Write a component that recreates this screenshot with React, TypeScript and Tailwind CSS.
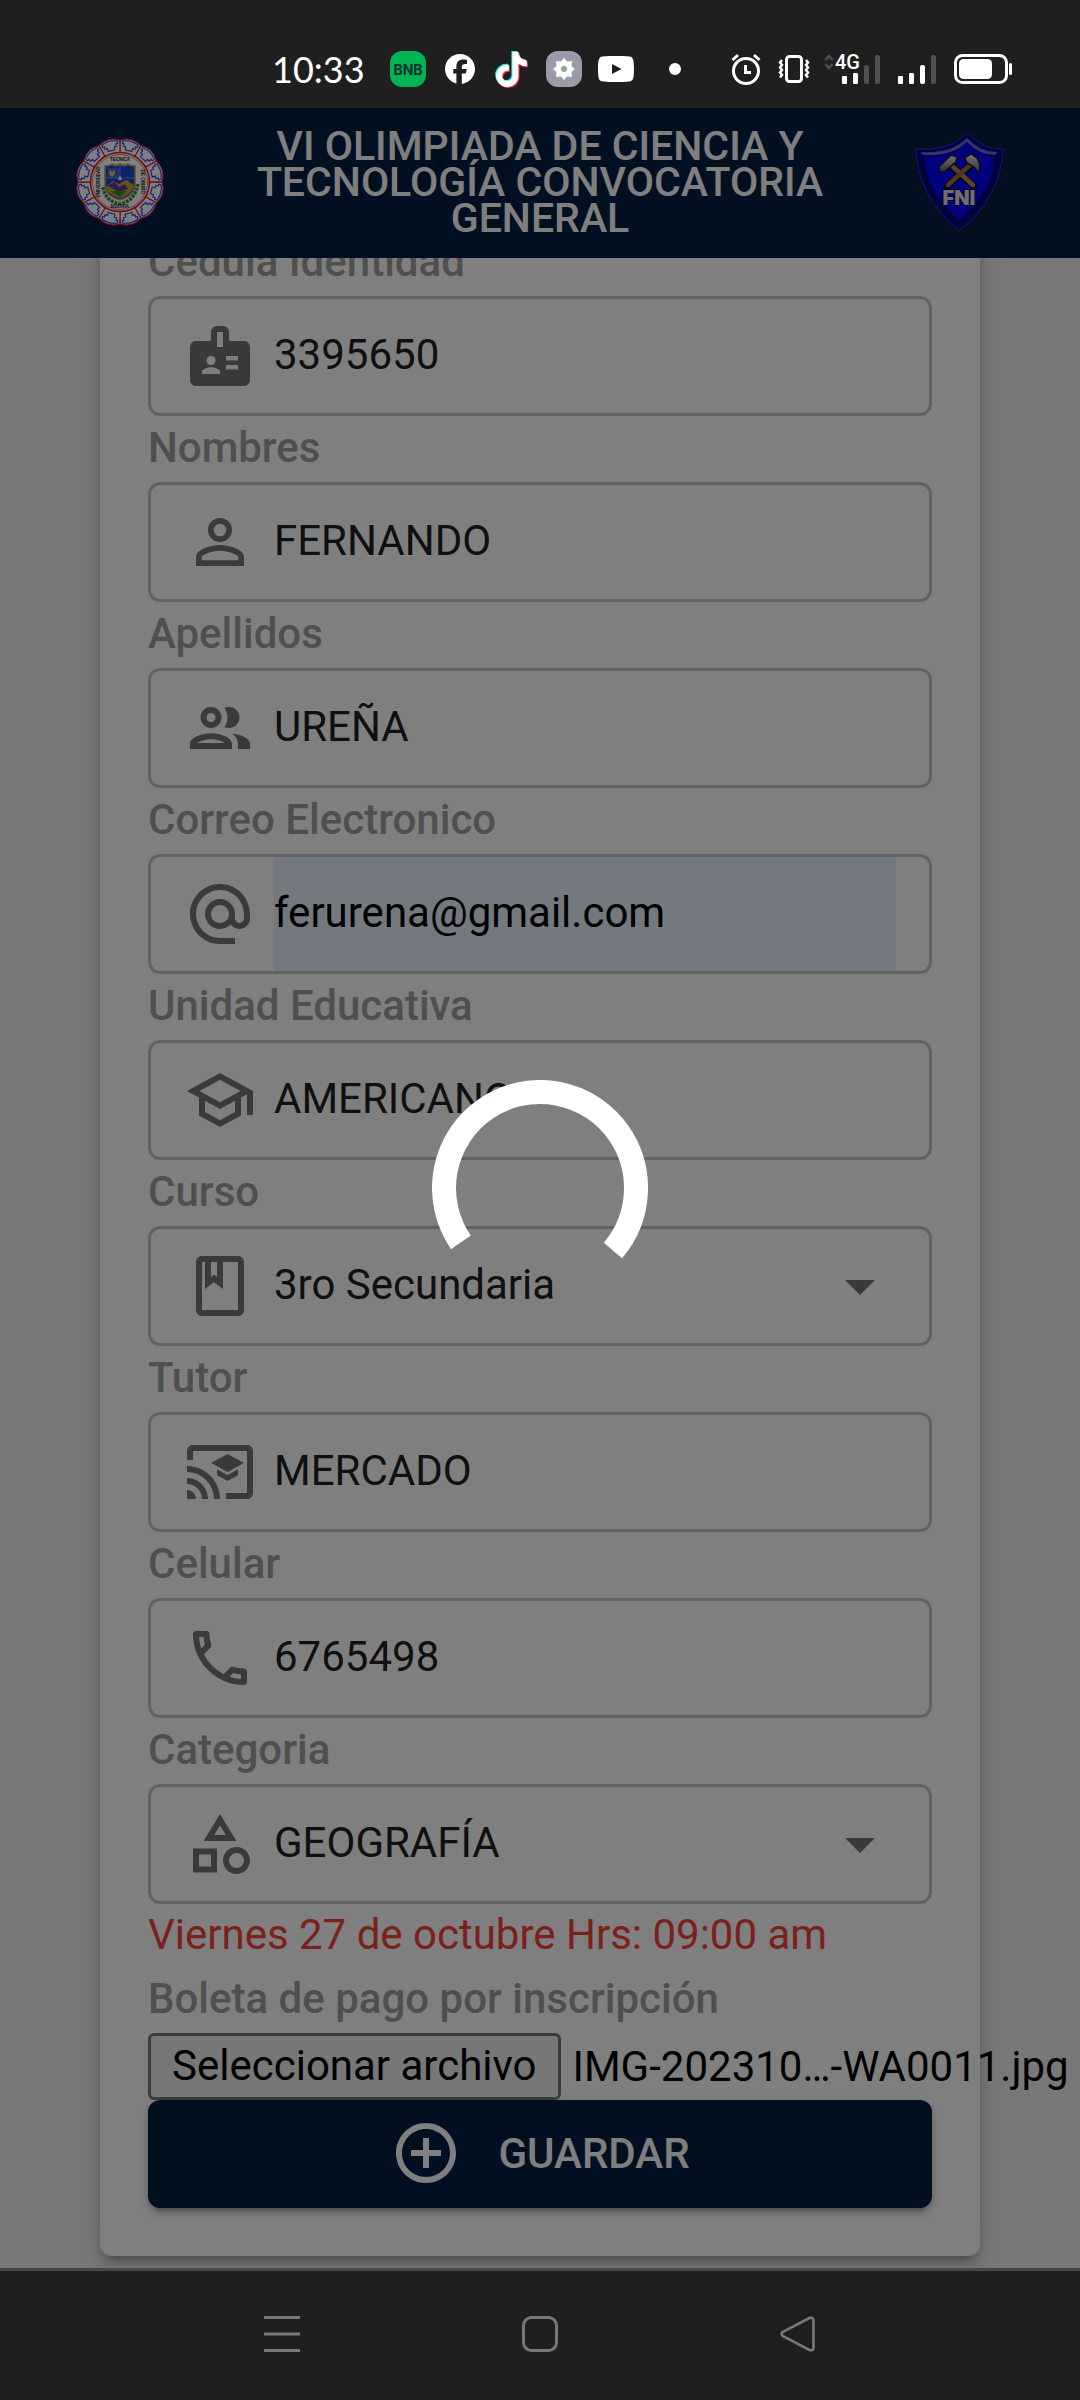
import React from "react";
import type { IconType } from "react-icons";
import {
  MdAddCircleOutline,
  MdAlternateEmail,
  MdArrowDropDown,
  MdBadge,
  MdOutlineCastForEducation,
  MdOutlineCategory,
  MdOutlineClass,
  MdOutlinePeople,
  MdOutlinePhone,
  MdOutlineSchool,
  MdPersonOutline,
} from "react-icons/md";
import { FaFacebook, FaTiktok } from "react-icons/fa6";

type FieldDef = {
  id: string;
  label: string;
  value: string;
  icon: IconType;
  type?: string;
  options?: string[];
  autofilled?: boolean;
};

const fields: FieldDef[] = [
  { id: "ci", label: "Cedula Identidad", value: "3395650", icon: MdBadge },
  { id: "nombres", label: "Nombres", value: "FERNANDO", icon: MdPersonOutline },
  { id: "apellidos", label: "Apellidos", value: "UREÑA", icon: MdOutlinePeople },
  { id: "correo", label: "Correo Electronico", value: "ferurena@gmail.com", icon: MdAlternateEmail, type: "email", autofilled: true },
  { id: "unidad", label: "Unidad Educativa", value: "AMERICANO", icon: MdOutlineSchool },
  { id: "curso", label: "Curso", value: "3ro Secundaria", icon: MdOutlineClass, options: ["3ro Secundaria"] },
  { id: "tutor", label: "Tutor", value: "MERCADO", icon: MdOutlineCastForEducation },
  { id: "celular", label: "Celular", value: "6765498", icon: MdOutlinePhone, type: "tel" },
  { id: "categoria", label: "Categoria", value: "GEOGRAFÍA", icon: MdOutlineCategory, options: ["GEOGRAFÍA"] },
];

function Field({ field }: { field: FieldDef }) {
  const Icon = field.icon;
  return (
    <div>
      <label htmlFor={field.id} className="mb-0.5 block leading-[64px] font-medium text-[#9e9e9e]">
        {field.label}
      </label>
      <div className="flex h-[120px] items-center gap-[18px] rounded-xl border-3 border-[#c4c4c4] px-[33px]">
        <Icon className="size-[72px] shrink-0 text-[#757575]" />
        {field.options ? (
          <div className="relative flex h-full min-w-0 flex-1 items-center">
            <select
              id={field.id}
              defaultValue={field.value}
              className="h-full w-full appearance-none bg-transparent pb-1 text-[#212121] outline-none"
            >
              {field.options.map((o) => (
                <option key={o}>{o}</option>
              ))}
            </select>
            <MdArrowDropDown className="pointer-events-none absolute right-0 size-[72px] text-[#757575]" />
          </div>
        ) : (
          <input
            id={field.id}
            type={field.type ?? "text"}
            defaultValue={field.value}
            className={
              field.autofilled
                ? "h-full min-w-0 flex-1 bg-[#e8f0fe] pb-1 text-black outline-none"
                : "h-full min-w-0 flex-1 bg-transparent pb-1 text-[#212121] outline-none"
            }
          />
        )}
      </div>
    </div>
  );
}

const segments = Array.from({ length: 12 }, (_, i) => i * 30);

function UniversitySeal() {
  return (
    <svg viewBox="0 0 90 90" className="size-[90px] shrink-0" role="img" aria-label="Universidad Técnica de Oruro">
      {segments.map((a) => (
        <g key={a} transform={`rotate(${a + 15} 45 45)`}>
          <path d="M37.2 16 L34.300 4.500 Q45 -2.500 55.700 4.500 L52.800 16 Z" fill="#fff" stroke="#e02020" strokeWidth="1.1" />
          <path
            d="M41.500 12.500v-3h-2.500v-2.500h-2V4.600Q45 1.200 53 4.600V7h-2v2.500h-2.500v3z"
            fill="none"
            stroke="#2638f0"
            strokeWidth="1.100"
          />
        </g>
      ))}
      <circle cx="45" cy="45" r="29.500" fill="#fff" stroke="#e02020" strokeWidth="1.500" />
      <circle cx="45" cy="45" r="27.500" fill="none" stroke="#e02020" strokeWidth=".6" />
      <path d="M28 50q2 14 17 17q15-3 18-20" fill="none" stroke="#3c8a30" strokeWidth="3.500" strokeDasharray="3 1" />
      <path d="M30 29q5 0 7-2 4 3 8 0 4 3 8 0 2 2 7 2v20q-1 10-15 14-14-4-15-14z" fill="#1748d0" stroke="#b8a05a" strokeWidth="1.600" />
      <path d="M32 31h12v10H32z" fill="#3a62c8" />
      <path d="M35 32l2 3 3-3v5l-3 3-3-3z" fill="#f0b080" />
      <path d="M31 50l7-6 6 3 7-4 8 5q-1 9-14 13-13-4-14-11z" fill="#d0a030" />
      <path d="M33 49l6-4 5 5 6-3 3 5-9 3z" fill="#5a3a9a" />
      <path d="M35 54h17l-7 6z" fill="#2f8a3c" />
      <path d="M45 28v14M31 41h28" stroke="#8fa4d8" strokeWidth=".8" />
      <path d="M45 38l2 5h-4z" fill="#fff" />
      <g fill="#111" fontFamily="Liberation Sans, sans-serif" fontWeight="700" textAnchor="middle">
        <text x="45" y="24" fontSize="4.500">TECNICA</text>
        <text x="45" y="71" fontSize="4.500">BOLIVIA</text>
        <text x="45" y="24.500" fontSize="4.500" transform="rotate(-90 45 45)">UNIVERSIDAD</text>
        <text x="45" y="24.500" fontSize="4.500" transform="rotate(90 45 45)">DE ORURO</text>
      </g>
    </svg>
  );
}

function FniShield() {
  return (
    <svg viewBox="0 0 90 100" className="h-[100px] w-[90px] shrink-0" role="img" aria-label="Facultad Nacional de Ingeniería">
      <defs>
        <linearGradient id="steel" x1="0" y1="0" x2="0" y2="1">
          <stop offset="0" stopColor="#e8e8e8" />
          <stop offset="1" stopColor="#5f5f5f" />
        </linearGradient>
      </defs>
      <path d="M53 1Q68 18 88 17Q86 65 44 99Q3 65 1 17Q34 20 53 1z" fill="#00008c" stroke="#2a34c8" strokeWidth="1" />
      <path d="M52 9Q65 23 81 23Q79 62 44 90Q10 62 7 23Q35 25 52 9z" fill="#0000ff" stroke="#000058" strokeWidth="2.500" />
      <path d="M6 20Q36 22 52 6Q66 21 83 20L80 23Q64 23 52 10Q36 25 8 23z" fill="#6f78e8" opacity=".9" />
      <path d="M36 34L59 54M55 34L32 54" stroke="#000040" strokeWidth="7" strokeLinecap="round" />
      <path d="M36 33L58 53" stroke="#c08050" strokeWidth="4.500" strokeLinecap="round" />
      <path d="M55 33L33 53" stroke="#a86c40" strokeWidth="4.500" strokeLinecap="round" />
      <path d="M24 35l12-12 6 2-1 5-11 9-5 1z" fill="url(#steel)" stroke="#1c1c28" strokeWidth="1.500" />
      <path d="M50 26l6-4 6 4 3 7-1 8-5-6-7-4z" fill="url(#steel)" stroke="#1c1c28" strokeWidth="1.500" />
      <text x="44" y="73" textAnchor="middle" fontFamily="Inter, sans-serif" fontWeight="900" fontSize="20" fill="#dcdcdc" stroke="#000050" strokeWidth="2" paintOrder="stroke">
        FNI
      </text>
    </svg>
  );
}

function StatusBar() {
  return (
    <div className="flex h-[108px] shrink-0 items-center justify-between bg-[#1f1f1f] pt-[30px] pr-[68px] pl-[272px] text-white">
      <div className="flex items-center">
        <time className="w-[118px] font-[Lato] text-[36px] leading-none">10:33</time>
        <span className="flex size-9 items-center justify-center rounded-xl bg-[#00b454] font-[Inter] text-[14px] font-bold text-[#10302a]">
          BNB
        </span>
        <FaFacebook className="ml-[19px] size-[30px]" />
        <span className="relative ml-[20px] h-9 w-8">
          <FaTiktok className="absolute top-0 left-0 h-[35px] w-[31px] text-[#25f4ee]" />
          <FaTiktok className="absolute top-0.5 left-0.5 h-[35px] w-[31px] text-[#fe2c55]" />
          <FaTiktok className="absolute top-px left-px h-[35px] w-[31px]" />
        </span>
        <span className="ml-[19px] flex size-9 items-center justify-center rounded-xl bg-[#9a9aaa]">
          <svg viewBox="0 0 24 24" className="size-6">
            <path d="M12 1l3 3.500 5-.5-.5 5L23 12l-3.500 3 .5 5-5-.5L12 23l-3-3.500-5 .5.500-5L1 12l3.500-3L4 4l5 .5z" fill="#fff" />
            <circle cx="12" cy="12" r="3" fill="#8fa58f" />
          </svg>
        </span>
        <svg viewBox="0 0 36 26" className="ml-4 h-[26px] w-9">
          <path d="M18 0c8 0 13 .3 14.500.8C35 1.500 36 4 36 13s-1 11.500-3.500 12.200C31 25.700 26 26 18 26s-13-.3-14.500-.8C1 24.500 0 22 0 13S1 1.500 3.500.8C5 .3 10 0 18 0z" fill="#fff" />
          <path d="M14 8v10l9.500-5z" fill="#1f1f1f" />
        </svg>
        <span className="ml-[35px] size-3 rounded-full bg-white" />
      </div>
      <div className="flex items-center">
        <svg viewBox="0 0 30 32" className="h-8 w-[30px]" fill="none" stroke="#fff">
          <circle cx="15" cy="18" r="12.500" strokeWidth="3" />
          <path d="M14.500 12v7.500H20" strokeWidth="3" />
          <path d="M1.500 7L7 2M28.500 7L23 2" strokeWidth="3" />
        </svg>
        <svg viewBox="0 0 32 30" className="ml-[17px] h-[30px] w-8" fill="none" stroke="#fff">
          <rect x="8.500" y="2.500" width="15" height="25" rx="3" strokeWidth="3" />
          <path d="M4 6l-2 2.500 2 2.500-2 2.500 2 2.500-2 2.500 2 2.500-2 2.500M28 6l2 2.500-2 2.500 2 2.500-2 2.500 2 2.500-2 2.500 2 2.500" strokeWidth="2.500" />
        </svg>
        <svg viewBox="0 0 57 32" className="ml-[14px] h-8 w-[57px] overflow-visible">
          <path d="M1.500 7L5 3l3.500 4M1.500 11L5 15l3.500-4" fill="none" stroke="#505050" strokeWidth="2.500" />
          <text x="11" y="16" fontFamily="Roboto, sans-serif" fontWeight="500" fontSize="20" fill="#fff">4G</text>
          <rect x="18" y="23" width="5" height="8" rx="1" fill="#fff" />
          <rect x="29" y="20" width="5" height="11" rx="1" fill="#fff" />
          <rect x="40" y="12" width="5" height="19" rx="2" fill="#505050" />
          <rect x="51" y="2" width="5" height="29" rx="2" fill="#505050" />
        </svg>
        <svg viewBox="0 0 38 32" className="ml-[17px] h-8 w-[38px]">
          <rect x="0" y="23" width="5" height="8" rx="1" fill="#fff" />
          <rect x="11" y="20" width="5" height="11" rx="1" fill="#fff" />
          <rect x="22" y="12" width="5" height="19" rx="2" fill="#fff" />
          <rect x="33" y="2" width="5" height="29" rx="2" fill="#505050" />
        </svg>
        <svg viewBox="0 0 58 30" className="ml-[18px] h-[30px] w-[58px]">
          <rect x="1.500" y="1.500" width="51" height="27" rx="7" fill="none" stroke="#fff" strokeWidth="3" />
          <rect x="5" y="5" width="33" height="20" rx="4.500" fill="#fff" />
          <rect x="55" y="9" width="3" height="12" rx="1.500" fill="#fff" />
        </svg>
      </div>
    </div>
  );
}

export default function App() {
  return (
    <div className="flex h-screen flex-col overflow-hidden font-[Roboto,sans-serif] text-[42px]">
      <StatusBar />

      <div className="relative flex min-h-0 flex-1 flex-col bg-[#f0f0f0]">
        <header className="z-10 flex h-[150px] shrink-0 items-center justify-between bg-[#002142] px-[75px] pb-0.5">
          <UniversitySeal />
          <h1 className="max-w-[600px] text-center text-[41px] leading-9 font-medium text-white">
            VI OLIMPIADA DE CIENCIA Y TECNOLOGÍA CONVOCATORIA GENERAL
          </h1>
          <FniShield />
        </header>

        <main className="flex min-h-0 flex-1 flex-col justify-end overflow-hidden px-[100px] pb-3">
          <form
            onSubmit={(e) => e.preventDefault()}
            className="rounded-xl bg-white p-12 shadow-[0_9px_9px_-6px_rgba(0,0,0,0.2),0_9px_12px_0_rgba(0,0,0,0.14),0_3px_24px_0_rgba(0,0,0,0.12)]"
          >
            {fields.map((f) => (
              <Field key={f.id} field={f} />
            ))}
            <p className="leading-[62px] whitespace-nowrap text-[#f44336]">Viernes 27 de octubre Hrs: 09:00 am</p>
            <label htmlFor="boleta" className="mb-0.5 block leading-[65px] font-medium text-[#9e9e9e]">
              Boleta de pago por inscripción
            </label>
            <div className="flex items-center gap-3 whitespace-nowrap text-black">
              <input id="boleta" type="file" className="sr-only" />
              <label
                htmlFor="boleta"
                className="h-[67px] shrink-0 rounded-md border-3 border-[#767676] bg-[#efefef] px-[21px] leading-[60px]"
              >
                Seleccionar archivo
              </label>
              <span className="leading-[60px]">IMG-202310…-WA0011.jpg</span>
            </div>
            <button
              type="submit"
              className="flex h-[108px] w-full items-center justify-center gap-9 rounded-xl bg-[#002142] pb-0.5 font-medium text-white shadow-[0_9px_3px_-6px_rgba(0,0,0,0.2),0_6px_6px_0_rgba(0,0,0,0.14),0_3px_15px_0_rgba(0,0,0,0.12)]"
            >
              <MdAddCircleOutline className="size-[72px]" />
              GUARDAR
            </button>
          </form>
        </main>

        <div role="status" aria-label="Cargando" className="absolute inset-0 z-20 flex items-center justify-center bg-black/50">
          <svg viewBox="0 0 216 216" className="size-[216px]">
            <circle
              cx="108"
              cy="108"
              r="96"
              fill="none"
              stroke="#fff"
              strokeWidth="24"
              pathLength="360"
              strokeDasharray="255 105"
              transform="rotate(145.500 108 108)"
            />
          </svg>
        </div>
      </div>

      <nav className="grid h-[132px] shrink-0 grid-cols-3 items-center justify-items-center border-t-3 border-[#474747] bg-[#1f1f1f] px-[153px] pb-1">
        <button type="button" aria-label="Recientes">
          <svg viewBox="0 0 36 36" className="size-9">
            <path d="M0 1.500h36M0 18h36M0 34.500h36" stroke="#787878" strokeWidth="3" />
          </svg>
        </button>
        <button type="button" aria-label="Inicio">
          <svg viewBox="0 0 36 36" className="size-9">
            <rect x="1.500" y="1.500" width="33" height="33" rx="8" fill="none" stroke="#787878" strokeWidth="3" />
          </svg>
        </button>
        <button type="button" aria-label="Atrás">
          <svg viewBox="0 0 36 36" className="size-9">
            <path
              d="M2.500 16.200L29.500 2Q33.500.800 33.500 4.500V31.500Q33.500 35.200 29.500 34L2.500 19.800Q.8 18 2.500 16.200z"
              fill="none"
              stroke="#787878"
              strokeWidth="2.600"
              strokeLinejoin="round"
            />
          </svg>
        </button>
      </nav>
    </div>
  );
}
